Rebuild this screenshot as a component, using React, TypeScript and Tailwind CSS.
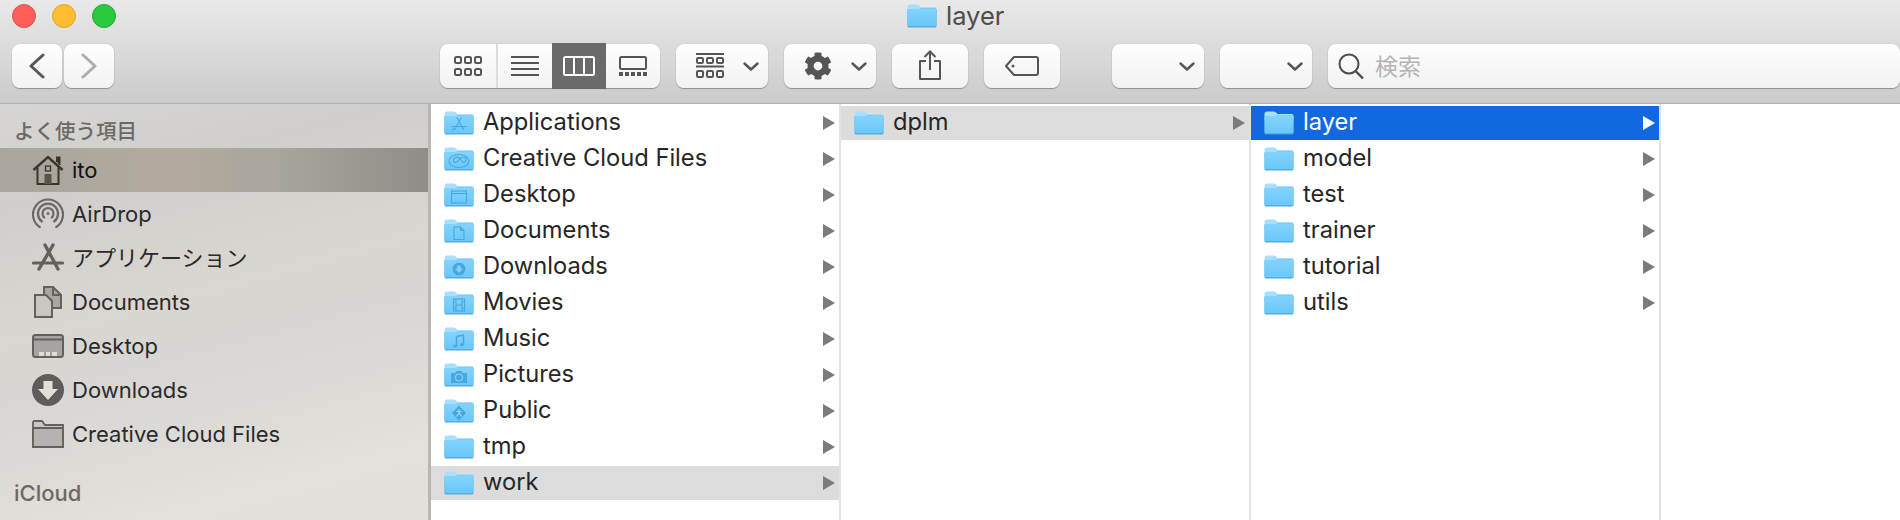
import React from 'react'
import { FaCog } from 'react-icons/fa'

const FONT = 'font-["Inter","Noto_Sans_CJK_JP",sans-serif]'

const Chevron = ({ className = '' }: { className?: string }) => (
  <svg width="16" height="9" viewBox="0 0 16 9" className={className} fill="none" stroke="#555" strokeWidth="2.4" strokeLinecap="round" strokeLinejoin="round">
    <path d="M1.5 1.5 8 7.5l6.5-6" />
  </svg>
)

const ToolButton = ({ className = '', children }: { className?: string; children?: React.ReactNode }) => (
  <div className={`flex h-[44px] items-center rounded-[8px] bg-[linear-gradient(#fefefe,#f2f2f2)] shadow-[0_1px_1px_rgba(0,0,0,0.3),0_0_1px_rgba(0,0,0,0.25)] ${className}`}>
    {children}
  </div>
)

// Folder with an optional darker glyph on its face
const Folder = ({ glyph }: { glyph?: string }) => (
  <svg width="30" height="24" viewBox="0 0 30 24" className="shrink-0">
    <defs>
      <linearGradient id="folderBody" x1="0" y1="0" x2="0" y2="1">
        <stop offset="0" stopColor="#84d4fc" />
        <stop offset="1" stopColor="#69c7f9" />
      </linearGradient>
    </defs>
    <path d="M0.5 3Q0.5 0.5 3 0.5H10Q11.5 0.5 12.5 2L13.5 3H28Q29.5 3 29.5 5V10H0.5Z" fill="#a6e0fc" />
    <path d="M0.5 22V6.5Q0.5 5 2 5H12L14 4.2H28Q29.5 4.2 29.5 6V22Q29.5 23.5 28 23.5H2Q0.5 23.5 0.5 22Z" fill="#4fa6d6" />
    <path d="M0.5 21V6.5Q0.5 5 2 5H12L14 4.2H28Q29.5 4.2 29.5 6V21Q29.5 22.3 28 22.3H2Q0.5 22.3 0.5 21Z" fill="url(#folderBody)" />
    <g fill="none" stroke="#49a6de" strokeWidth="1.1">
      {glyph === 'apps' && <path d="M13 6.500 20 19M17.500 6.500 10.500 19M7.500 15.500H22.500M8 19.500l2-2" />}
      {glyph === 'cloud' && (
        <>
          <ellipse cx="15" cy="14" rx="10" ry="6.500" />
          <path d="M9.500 14c0-5 6-5 7.500-1 1.500 3 5 3 5-.5 0-3-4-3-6-.5-2 3-6.500 5-6.500 2z" />
        </>
      )}
      {glyph === 'desktop' && (
        <>
          <rect x="7.500" y="8" width="15" height="12" />
          <path d="M7.500 10.500h15" />
        </>
      )}
      {glyph === 'docs' && <path d="M10 8h6.500l3.500 3.500V20.500H10ZM16.500 8v3.500H20" />}
      {glyph === 'movies' && (
        <>
          <rect x="9.500" y="8" width="11" height="12" />
          <path d="M12 8v12M18 8v12M12 14h6M9.500 11h2.500M9.500 17h2.500M18 11h2.500M18 17h2.500" />
        </>
      )}
    </g>
    {glyph === 'downloads' && (
      <g>
        <circle cx="15" cy="14" r="6.500" fill="#49a6de" />
        <path d="M13.300 10.500h3.400v3.300h2.300L15 18l-4-4.200h2.300Z" fill="#7fd2fb" />
      </g>
    )}
    {glyph === 'music' && <path d="M12.500 9.500 19.500 8V17.500M12.500 9.500V19" fill="none" stroke="#49a6de" strokeWidth="1.400" />}
    {glyph === 'music' && (
      <g fill="#49a6de">
        <ellipse cx="11" cy="19" rx="2" ry="1.500" />
        <ellipse cx="18" cy="17.500" rx="2" ry="1.500" />
      </g>
    )}
    {glyph === 'pictures' && (
      <g>
        <path d="M7 10h4l1.500-2h5L19 10h4v10H7Z" fill="#49a6de" />
        <circle cx="15" cy="14.500" r="3.500" fill="none" stroke="#84d4fc" strokeWidth="1.100" />
      </g>
    )}
    {glyph === 'public' && (
      <g>
        <path d="M15 6.500 22 14l-7 7.500L8 14Z" fill="#49a6de" />
        <path d="M15 10v4M15 14l-2.500 3.500M15 14l2.500 3.500M12.500 12.500h5" fill="none" stroke="#9adcfc" strokeWidth="1.200" />
      </g>
    )}
  </svg>
)

const Row = ({ name, glyph, state }: { name: string; glyph?: string; state?: 'path' | 'active' }) => (
  <div
    className={`mb-[2px] flex h-[34px] items-center pl-[13px] pr-[4px] ${
      state === 'active' ? 'bg-[#1268de] text-white' : state === 'path' ? 'bg-[#dcdcdc] text-[#262626]' : 'text-[#262626]'
    }`}
  >
    <Folder glyph={glyph} />
    <span className="-mt-[3px] ml-[9px] flex-1 text-[23.700px] leading-none">{name}</span>
    <svg width="12" height="14" viewBox="0 0 12 14">
      <path d="M0 0 12 7 0 14Z" fill={state === 'active' ? '#fff' : '#7b7b7b'} />
    </svg>
  </div>
)

const Column = ({ children }: { children: React.ReactNode }) => (
  <div className="w-[410px] border-r-2 border-[#e2e2e2] pt-[2px] pl-0">{children}</div>
)

const home = (
  <svg width="32" height="32" viewBox="0 0 32 32" fill="none" stroke="#3a3429" strokeWidth="2">
    <path d="M1.500 16 16 3l14.500 13" strokeWidth="2.400" />
    <path d="M25 8V3.500h2.500V11" fill="#3a3429" />
    <path d="M5.500 13.500V30h21V13.500" />
    <rect x="13.500" y="12" width="5" height="5" strokeWidth="1.300" />
    <rect x="12.500" y="20" width="7" height="10" fill="#5c5448" stroke="none" />
  </svg>
)
const airdrop = (
  <svg width="32" height="32" viewBox="0 0 32 32" fill="none" stroke="#6a6864" strokeWidth="2.200">
    <path d="M8.500 29.500a15 15 0 1 1 15 0" />
    <path d="M10.500 24a10 10 0 1 1 11 0" />
    <path d="M12.800 20a5.500 5.500 0 1 1 6.400 0" />
    <circle cx="16" cy="15.500" r="1.500" fill="#6a6864" stroke="none" />
  </svg>
)
const appstore = (
  <svg width="32" height="30" viewBox="0 0 32 30" fill="none" stroke="#63615d" strokeLinecap="round">
    <path d="M13 2 26 26M21 2 7 26" strokeWidth="3.400" />
    <path d="M1.500 20H30.500" strokeWidth="3.200" />
  </svg>
)
const documents = (
  <svg width="30" height="34" viewBox="0 0 30 34" stroke="#63615d" strokeWidth="2">
    <path d="M11 2h9l8 8v13H11Z" fill="#a8a6a2" />
    <path d="M20 2v8h8" fill="none" />
    <path d="M2 10h11l6 6v16H2Z" fill="#c9c7c3" />
  </svg>
)
const desktop = (
  <svg width="32" height="24" viewBox="0 0 32 24" stroke="#63615d" strokeWidth="2">
    <rect x="1" y="1" width="30" height="22" rx="2.500" fill="#a6a4a0" />
    <path d="M1 5.500h30" />
    <rect x="7" y="18" width="18" height="4" fill="#dedcd8" stroke="none" />
    <path d="M13 18v4M19 18v4" strokeWidth="1" />
  </svg>
)
const downloads = (
  <svg width="32" height="32" viewBox="0 0 32 32">
    <circle cx="16" cy="16" r="16" fill="#5f5d5a" />
    <path d="M11.500 7h9v8h5.500L16 26 6 15h5.500Z" fill="#e2dfda" />
  </svg>
)
const plainFolder = (
  <svg width="32" height="28" viewBox="0 0 32 28" stroke="#63615d" strokeWidth="1.800">
    <path d="M1 27V2.500Q1 1 2.500 1H10l3 4h18v22Z" fill="#c9c7c3" />
    <path d="M1 8h30v19H1Z" fill="#b5b3af" />
  </svg>
)

const favourites: { name: string; icon: React.ReactNode; active?: boolean }[] = [
  { name: 'ito', icon: home, active: true },
  { name: 'AirDrop', icon: airdrop },
  { name: 'アプリケーション', icon: appstore },
  { name: 'Documents', icon: documents },
  { name: 'Desktop', icon: desktop },
  { name: 'Downloads', icon: downloads },
  { name: 'Creative Cloud Files', icon: plainFolder },
]

const homeFolders = [
  { name: 'Applications', glyph: 'apps' },
  { name: 'Creative Cloud Files', glyph: 'cloud' },
  { name: 'Desktop', glyph: 'desktop' },
  { name: 'Documents', glyph: 'docs' },
  { name: 'Downloads', glyph: 'downloads' },
  { name: 'Movies', glyph: 'movies' },
  { name: 'Music', glyph: 'music' },
  { name: 'Pictures', glyph: 'pictures' },
  { name: 'Public', glyph: 'public' },
  { name: 'tmp' },
  { name: 'work' },
]

const Toolbar = () => (
  <div className="h-[104px] border-b border-[#b2b2b2] bg-[linear-gradient(#e9e9e9,#cbcbcb)]">
    <div className="flex h-[44px] items-start pl-[12px] pt-[4px]">
      <div className="h-[24px] w-[24px] rounded-full border border-[#e2524c] bg-[#ff5f58]" />
      <div className="ml-[16px] h-[24px] w-[24px] rounded-full border border-[#dfa32a] bg-[#ffbd2e]" />
      <div className="ml-[16px] h-[24px] w-[24px] rounded-full border border-[#20a532] bg-[#29c940]" />
      <div className="ml-[791px] flex items-center">
        <Folder />
        <span className="ml-[9px] text-[25.500px] leading-[24px] text-[#4d4d4d]">layer</span>
      </div>
    </div>
    <div className="flex items-center pl-[12px]">
      <ToolButton className="w-[50px] justify-center">
        <svg width="16" height="26" viewBox="0 0 16 26" fill="none" stroke="#555" strokeWidth="3" strokeLinecap="round" strokeLinejoin="round">
          <path d="M14 2 2 13l12 11" />
        </svg>
      </ToolButton>
      <ToolButton className="ml-[2px] w-[50px] justify-center">
        <svg width="16" height="26" viewBox="0 0 16 26" fill="none" stroke="#adadad" strokeWidth="3" strokeLinecap="round" strokeLinejoin="round">
          <path d="M2 2l12 11L2 24" />
        </svg>
      </ToolButton>

      <ToolButton className="ml-[326px] w-[220px]">
        <div className="flex h-full w-[58px] items-center justify-center border-r-2 border-[#dcdcdc]">
          <svg width="28" height="20" viewBox="0 0 28 20" fill="none" stroke="#555" strokeWidth="2">
            <rect x="1" y="1" width="6" height="6" rx="1.500" />
            <rect x="11" y="1" width="6" height="6" rx="1.500" />
            <rect x="21" y="1" width="6" height="6" rx="1.500" />
            <rect x="1" y="13" width="6" height="6" rx="1.500" />
            <rect x="11" y="13" width="6" height="6" rx="1.500" />
            <rect x="21" y="13" width="6" height="6" rx="1.500" />
          </svg>
        </div>
        <div className="flex h-full w-[54px] items-center justify-center">
          <svg width="28" height="20" viewBox="0 0 28 20" stroke="#555" strokeWidth="2">
            <path d="M0 1h28M0 7h28M0 13h28M0 19h28" />
          </svg>
        </div>
        <div className="-my-px flex h-[46px] w-[54px] items-center justify-center bg-[#6a6a6a]">
          <svg width="32" height="20" viewBox="0 0 32 20" fill="none" stroke="#fff" strokeWidth="2">
            <rect x="1" y="1" width="30" height="18" rx="1.500" />
            <path d="M11 1v18M21 1v18" />
          </svg>
        </div>
        <div className="flex h-full w-[54px] items-center justify-center">
          <svg width="28" height="20" viewBox="0 0 28 20" fill="none" stroke="#555" strokeWidth="2">
            <rect x="1" y="1" width="26" height="12" rx="1.500" />
            <path d="M0 18h4M6 18h4M12 18h4M18 18h4M24 18h4" strokeWidth="4" />
          </svg>
        </div>
      </ToolButton>

      <ToolButton className="ml-[16px] w-[92px] pl-[20px]">
        <svg width="28" height="26" viewBox="0 0 28 26" fill="none" stroke="#555" strokeWidth="2">
          <path d="M0 1h28M0 13.500h28" />
          <rect x="1" y="5" width="6" height="5" rx="1.200" />
          <rect x="11" y="5" width="6" height="5" rx="1.200" />
          <rect x="21" y="5" width="6" height="5" rx="1.200" />
          <rect x="1" y="18" width="6" height="6" rx="1.200" />
          <rect x="11" y="18" width="6" height="6" rx="1.200" />
          <rect x="21" y="18" width="6" height="6" rx="1.200" />
        </svg>
        <Chevron className="ml-[19px]" />
      </ToolButton>

      <ToolButton className="ml-[16px] w-[92px] pl-[20px]">
        <FaCog size={28} color="#555" />
        <Chevron className="ml-[19px]" />
      </ToolButton>

      <ToolButton className="ml-[16px] w-[76px] justify-center">
        <svg width="22" height="30" viewBox="0 0 22 30" fill="none" stroke="#555" strokeWidth="2" className="-mt-[2px]">
          <path d="M11 1.500V20M5.500 7 11 1.500 16.500 7" />
          <path d="M7 11H1v18h20V11h-6" strokeLinejoin="round" />
        </svg>
      </ToolButton>

      <ToolButton className="ml-[16px] w-[76px] justify-center">
        <svg width="34" height="20" viewBox="0 0 34 20" fill="none" stroke="#555" strokeWidth="2" strokeLinejoin="round">
          <path d="M9 1h22a2 2 0 0 1 2 2v14a2 2 0 0 1-2 2H9L1 10Z" />
          <circle cx="8" cy="10" r="1.500" fill="#555" stroke="none" />
        </svg>
      </ToolButton>

      <ToolButton className="ml-[52px] w-[92px] justify-end pr-[9px]">
        <Chevron />
      </ToolButton>
      <ToolButton className="ml-[16px] w-[92px] justify-end pr-[9px]">
        <Chevron />
      </ToolButton>

      <ToolButton className="ml-[16px] flex-1 pl-[10px]">
        <svg width="26" height="26" viewBox="0 0 26 26" fill="none" stroke="#4a4a4a" strokeWidth="2">
          <circle cx="11" cy="11" r="9.500" />
          <path d="M17.500 18 25 25.500" strokeWidth="2.400" />
        </svg>
        <span className="ml-[11px] mt-[2px] text-[23px] leading-none text-[#b4b4b4]">検索</span>
      </ToolButton>
    </div>
  </div>
)

const Sidebar = () => (
  <div className="w-[431px] shrink-0 border-r-[3px] border-[#b9b7b3] bg-[linear-gradient(165deg,#d6d5d1,#d0cfcc_20%,#dad6d1_45%,#d8d7d4_60%,#e4e0db_85%,#e3dfda)]">
    <div className="flex h-[44px] items-center pl-[14px] pt-[12px] text-[20.500px] font-medium leading-none text-[#6b6966]">よく使う項目</div>
    {favourites.map((item) => (
      <div
        key={item.name}
        className={`flex h-[44px] items-center ${
          item.active ? 'bg-[linear-gradient(90deg,#a8a59c,#b3aa9e_40%,#a8a59c_65%,#8f8d88)] text-[#111]' : 'text-[#2a2a2a]'
        }`}
      >
        <div className="flex w-[72px] justify-center pl-[32px] pr-[8px]">{item.icon}</div>
        <span className="text-[22px] leading-none">{item.name}</span>
      </div>
    ))}
    <div className="pl-[14px] pt-[27px] text-[22px] font-medium leading-[20px] text-[#6b6966]">iCloud</div>
  </div>
)

export default function App() {
  return (
    <div className={`h-[520px] w-[1900px] overflow-hidden bg-white ${FONT}`}>
      <Toolbar />
      <div className="flex h-[416px]">
        <Sidebar />
        <Column>
          {homeFolders.map((f) => (
            <Row key={f.name} name={f.name} glyph={f.glyph} state={f.name === 'work' ? 'path' : undefined} />
          ))}
        </Column>
        <Column>
          <Row name="dplm" state="path" />
        </Column>
        <Column>
          <Row name="layer" state="active" />
          {['model', 'test', 'trainer', 'tutorial', 'utils'].map((name) => (
            <Row key={name} name={name} />
          ))}
        </Column>
      </div>
    </div>
  )
}
